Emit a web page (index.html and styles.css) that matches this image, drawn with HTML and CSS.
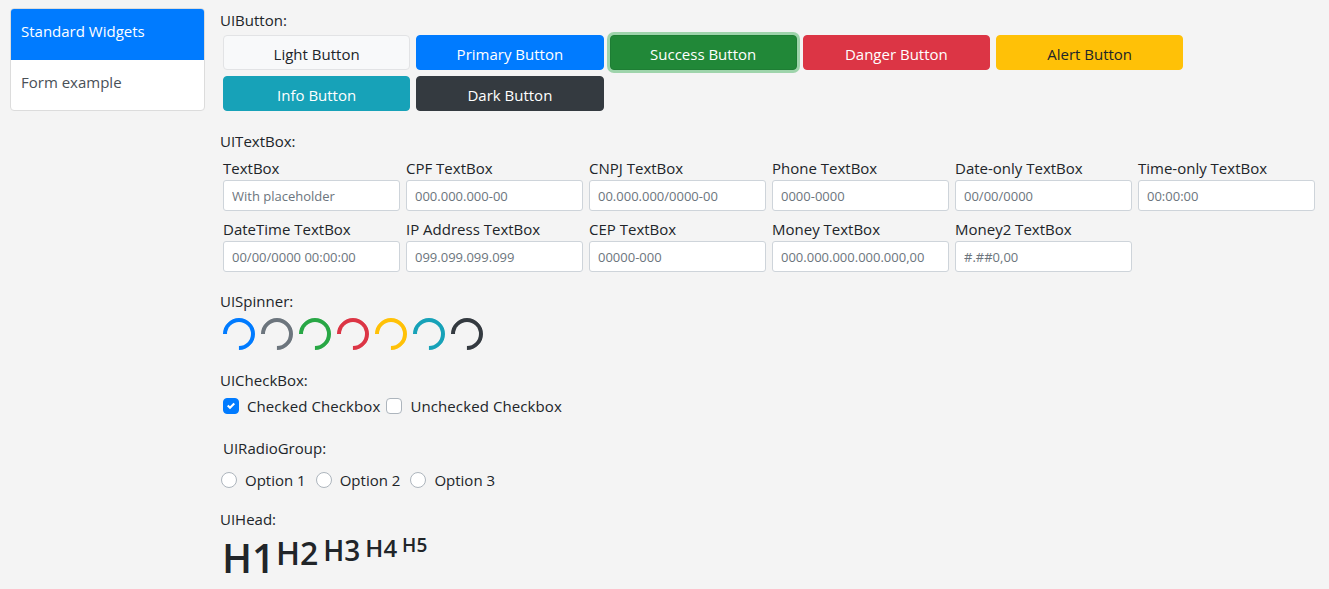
FILE: index.html
```html
<!DOCTYPE html>
<html lang="en">
<head>
<meta charset="utf-8">
<title>Standard Widgets</title>
<link rel="stylesheet" href="styles.css">
</head>
<body>
<div class="layout">
  <nav class="sidebar">
    <a class="nav-item active">Standard Widgets</a>
    <a class="nav-item">Form example</a>
  </nav>
  <main class="main">
    <section class="sec sec-buttons">
      <div class="title">UIButton:</div>
      <div class="buttons">
        <button class="btn btn-light">Light Button</button>
        <button class="btn btn-primary">Primary Button</button>
        <button class="btn btn-success">Success Button</button>
        <button class="btn btn-danger">Danger Button</button>
        <button class="btn btn-warning">Alert Button</button>
        <button class="btn btn-info">Info Button</button>
        <button class="btn btn-dark">Dark Button</button>
      </div>
    </section>

    <section class="sec sec-text">
      <div class="title">UITextBox:</div>
      <div class="fields">
        <label class="field"><span class="flabel">TextBox</span><input class="input" placeholder="With placeholder"></label>
        <label class="field"><span class="flabel">CPF TextBox</span><input class="input" placeholder="000.000.000-00"></label>
        <label class="field"><span class="flabel">CNPJ TextBox</span><input class="input" placeholder="00.000.000/0000-00"></label>
        <label class="field"><span class="flabel">Phone TextBox</span><input class="input" placeholder="0000-0000"></label>
        <label class="field"><span class="flabel">Date-only TextBox</span><input class="input" placeholder="00/00/0000"></label>
        <label class="field"><span class="flabel">Time-only TextBox</span><input class="input" placeholder="00:00:00"></label>
        <label class="field"><span class="flabel">DateTime TextBox</span><input class="input" placeholder="00/00/0000 00:00:00"></label>
        <label class="field"><span class="flabel">IP Address TextBox</span><input class="input" placeholder="099.099.099.099"></label>
        <label class="field"><span class="flabel">CEP TextBox</span><input class="input" placeholder="00000-000"></label>
        <label class="field"><span class="flabel">Money TextBox</span><input class="input" placeholder="000.000.000.000.000,00"></label>
        <label class="field"><span class="flabel">Money2 TextBox</span><input class="input" placeholder="#.##0,00"></label>
      </div>
    </section>

    <section class="sec sec-spin">
      <div class="title">UISpinner:</div>
      <div class="spinners">
        <span class="spinner sp-primary"></span>
        <span class="spinner sp-secondary"></span>
        <span class="spinner sp-success"></span>
        <span class="spinner sp-danger"></span>
        <span class="spinner sp-warning"></span>
        <span class="spinner sp-info"></span>
        <span class="spinner sp-dark"></span>
      </div>
    </section>

    <section class="sec sec-check">
      <div class="title">UICheckBox:</div>
      <div class="checks">
        <label class="check">
          <span class="box checked"><svg viewBox="0 0 8 8" width="8" height="8"><path fill="#fff" d="M6.564.75l-3.59 3.612-1.538-1.55L0 4.26l2.974 2.99L8 2.193z"/></svg></span>
          <span class="check-label">Checked Checkbox</span>
        </label>
        <label class="check">
          <span class="box"></span>
          <span class="check-label">Unchecked Checkbox</span>
        </label>
      </div>
    </section>

    <section class="sec sec-radio">
      <div class="title title-radio">UIRadioGroup:</div>
      <div class="radios">
        <label class="radio"><span class="dot"></span><span>Option 1</span></label>
        <label class="radio"><span class="dot"></span><span>Option 2</span></label>
        <label class="radio"><span class="dot"></span><span>Option 3</span></label>
      </div>
    </section>

    <section class="sec sec-head">
      <div class="title">UIHead:</div>
      <div class="heads">
        <h1 class="h h1">H1</h1>
        <h2 class="h h2">H2</h2>
        <h3 class="h h3">H3</h3>
        <h4 class="h h4">H4</h4>
        <h5 class="h h5">H5</h5>
      </div>
    </section>
  </main>
</div>
</body>
</html>
```

FILE: styles.css
```css
* { box-sizing: border-box; }

html, body {
  background: #f4f4f4;
}

body {
  margin: 8px;
  font-family: "Open Sans", "Noto Sans", "Liberation Sans", sans-serif;
  font-size: 15px;
  line-height: 24px;
  color: #212529;
}

.layout {
  display: flex;
  align-items: flex-start;
}

.sidebar {
  width: 195px;
  margin-left: 2px;
  display: flex;
  flex-direction: column;
  background: #fff;
  border: 1px solid #dcdcdc;
  border-radius: 4px;
  overflow: hidden;
}

.nav-item {
  display: block;
  color: #495057;
  font-size: 15px;
}

.nav-item.active {
  background: #007bff;
  color: #fff;
  margin: -1px -1px 0;
  padding: 11px 10px 0 11px;
  height: 52px;
}

.nav-item + .nav-item {
  height: 50px;
  padding: 10px 10px 0;
}

.main {
  margin-left: 15px;
  width: 1101px;
}

.title {
  height: 24px;
  line-height: 24px;
}

.sec-text { margin-top: 18px; }
.sec-spin { margin-top: 17px; }
.sec-check { margin-top: 18px; }
.sec-radio { margin-top: 18px; }
.sec-head { margin-top: 15px; }

/* Buttons */
.buttons {
  margin-top: 3px;
  padding-left: 3px;
  display: flex;
  flex-wrap: wrap;
  gap: 6px 6px;
}

.btn {
  width: 187.25px;
  height: 35px;
  border: 1px solid transparent;
  border-radius: 4px;
  font-family: inherit;
  font-size: 15px;
  line-height: 22px;
  padding: 7px 12px 4px;
  text-align: center;
  color: #fff;
}

.btn-light { background: #f8f9fa; border-color: #e2e3e5; color: #212529; }
.btn-primary { background: #007bff; border-color: #007bff; }
.btn-success {
  background: #218838;
  border-color: #1e7e34;
  box-shadow: 0 0 0 3px rgba(72, 180, 97, 0.5);
}
.btn-danger { background: #dc3545; border-color: #dc3545; }
.btn-warning { background: #ffc107; border-color: #ffc107; color: #212529; }
.btn-info { background: #17a2b8; border-color: #17a2b8; }
.btn-dark { background: #343a40; border-color: #343a40; }

/* Text boxes */
.fields {
  margin-top: 3px;
  padding-left: 3px;
  display: grid;
  grid-template-columns: repeat(6, 177px);
  column-gap: 6px;
  row-gap: 6px;
}

.field {
  display: flex;
  flex-direction: column;
}

.flabel {
  height: 24px;
  line-height: 24px;
}

.input {
  width: 177px;
  height: 31px;
  padding: 4px 8px;
  font-family: inherit;
  font-size: 13px;
  color: #495057;
  background: #fff;
  border: 1px solid #ced4da;
  border-radius: 3px;
}

.input::placeholder { color: #6c757d; opacity: 1; }

/* Spinners */
.spinners {
  margin-top: 5px;
  padding-left: 3px;
  display: flex;
  gap: 6px;
}

.spinner {
  width: 32px;
  height: 32px;
  border: 4px solid currentColor;
  border-left-color: transparent;
  border-radius: 50%;
  transform: rotate(-45deg);
}

.sp-primary { color: #007bff; }
.sp-secondary { color: #6c757d; }
.sp-success { color: #28a745; }
.sp-danger { color: #dc3545; }
.sp-warning { color: #ffc107; }
.sp-info { color: #17a2b8; }
.sp-dark { color: #343a40; }

/* Checkboxes */
.checks {
  margin-top: 2px;
  padding-left: 3px;
  display: flex;
  height: 24px;
  align-items: center;
}

.check {
  display: flex;
  align-items: center;
}

.check + .check { margin-left: 6px; }

.box {
  width: 16px;
  height: 16px;
  border: 1px solid #adb5bd;
  border-radius: 4px;
  background: #fff;
  display: flex;
  align-items: center;
  justify-content: center;
  margin-right: 8px;
}

.box.checked {
  background: #007bff;
  border-color: #007bff;
}

.check-label { letter-spacing: 0.1px; }

/* Radios */
.title-radio { padding-left: 3px; }

.radios {
  margin-top: 8px;
  padding-left: 1px;
  display: flex;
  height: 24px;
  align-items: center;
}

.radio {
  display: flex;
  align-items: center;
  margin-right: 10px;
}

.dot {
  width: 16px;
  height: 16px;
  border: 1px solid #adb5bd;
  border-radius: 50%;
  background: #fff;
  margin-right: 8px;
}

/* Heads */
.heads {
  margin-top: 3px;
  padding-left: 2px;
  display: flex;
  align-items: flex-start;
  gap: 5px;
}

.h {
  margin: 0;
  font-weight: 600;
  line-height: 1.2;
  color: #212529;
}

.h1 { font-size: 40px; margin-right: -4px; }
.h2 { font-size: 32px; }
.h3 { font-size: 28px; }
.h4 { font-size: 24px; }
.h5 { font-size: 19px; }
```
